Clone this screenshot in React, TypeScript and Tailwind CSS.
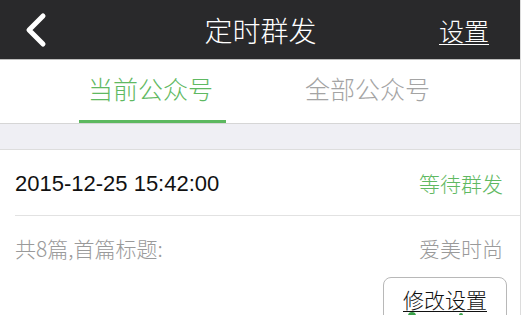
import React from "react";

export default function App() {
  const cjk = { fontFamily: '"Noto Sans CJK SC", "Noto Sans", sans-serif' };
  return (
    <div className="w-[527px] h-[315px] overflow-hidden bg-white font-light" style={cjk}>
      <div className="w-[521px] h-[315px] border-r border-[#dcdcdc] relative">
        {/* header */}
        <div className="h-[60px] bg-[#29292b] flex items-center relative border-b border-[#bdbdbd]">
          <div className="pl-[24px] w-[60px] flex items-center">
            <svg width="24" height="36" viewBox="0 0 24 36">
              <path d="M19 4 L5 18 L19 32" fill="none" stroke="#ffffff" strokeWidth="5" strokeLinecap="round" strokeLinejoin="round" />
            </svg>
          </div>
          <div className="flex-1 text-center text-white text-[28px] leading-[32px] pl-[22px]">定时群发</div>
          <div className="pr-[31px] text-white text-[25px] leading-[30px] underline underline-offset-[3px] decoration-1">设置</div>
        </div>
        {/* tabs */}
        <div className="h-[64px] flex pl-[79px] border-b border-[#d6d6d6]">
          <div className="w-[147px] flex flex-col items-center justify-end">
            <div className="text-[25px] leading-[30px] text-[#5fb962] pr-[4px] mb-[17px]">当前公众号</div>
            <div className="h-[3px] w-full bg-[#5cb85f]" />
          </div>
          <div className="w-[147px] ml-[68px] flex flex-col items-center justify-end">
            <div className="text-[25px] leading-[30px] text-[#a4a4a4] mb-[20px]">全部公众号</div>
          </div>
        </div>
        {/* gray band */}
        <div className="h-[26px] bg-[#efeff4] border-b border-[#dddddd]" />
        {/* card */}
        <div className="pl-[15px]">
          <div className="h-[66px] flex items-center justify-between pr-[17px] border-b border-[#e2e2e2]">
            <div className="text-[22px] leading-[28px] text-[#111111] font-normal mt-[2px]" style={{ fontFamily: '"Liberation Sans", Arial, sans-serif' }}>
              2015-12-25 15:42:00
            </div>
            <div className="text-[21px] leading-[28px] text-[#5fb962]">等待群发</div>
          </div>
          <div className="pt-[18px] flex items-center justify-between pr-[17px]">
            <div className="text-[21px] leading-[28px] text-[#9a9a9a]">共8篇,首篇标题:</div>
            <div className="text-[21px] leading-[28px] text-[#9a9a9a]">爱美时尚</div>
          </div>
          <div className="flex justify-end pr-[13px] mt-[15px]">
            <div className="w-[124px] h-[50px] border border-[#b8b8b8] rounded-[8px] flex justify-center pt-[9px]">
              <div className="text-[21px] leading-[24px] text-[#111111] underline underline-offset-[3px] decoration-1">修改设置</div>
            </div>
          </div>
        </div>
        <div className="absolute left-[408px] top-[312px] w-[8px] h-[8px] rounded-full bg-[#3aa14a]" />
        <div className="absolute left-[459px] top-[313px] w-[4px] h-[4px] rounded-full bg-[#3aa14a]" />
      </div>
    </div>
  );
}
